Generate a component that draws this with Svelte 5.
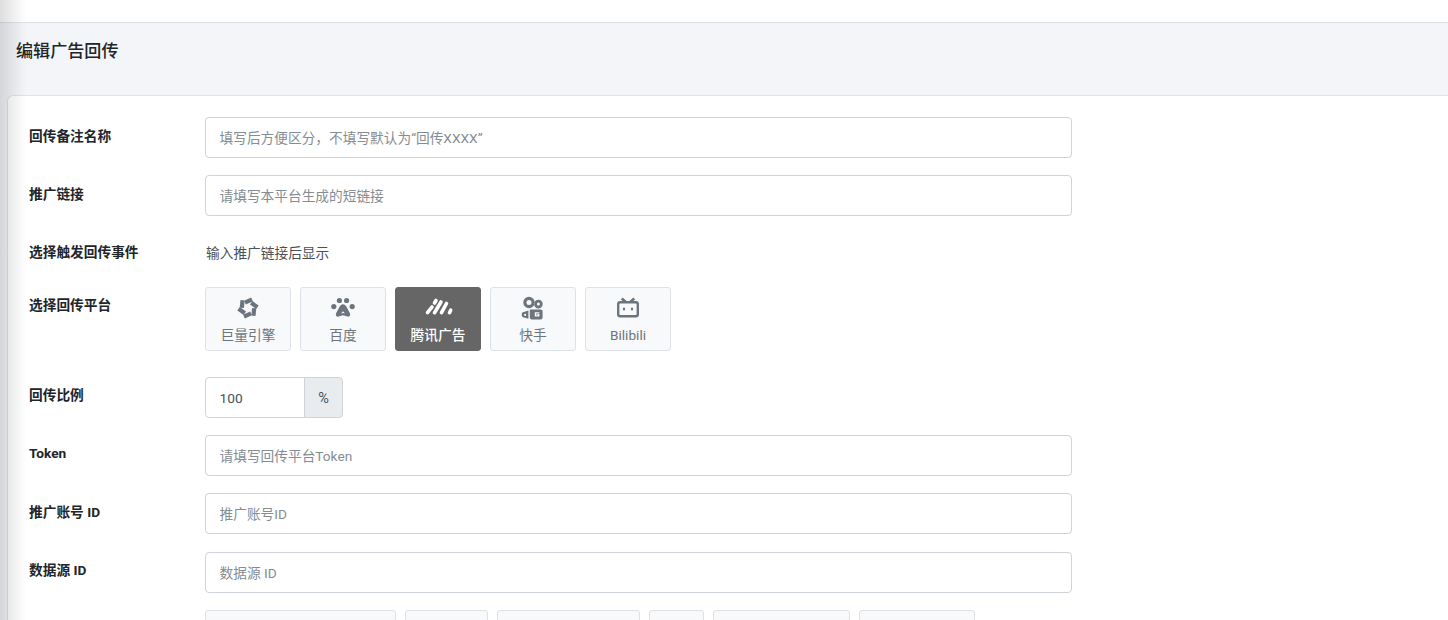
<script>
  const platforms = [
    { id: 'juliang', name: '巨量引擎' },
    { id: 'baidu', name: '百度' },
    { id: 'tencent', name: '腾讯广告', active: true },
    { id: 'kuaishou', name: '快手' },
    { id: 'bilibili', name: 'Bilibili' }
  ];

  const lastOptions = [191, 83, 143, 55, 137, 116];
  const blades = [0, 60, 120, 180, 240, 300];
</script>

<div class="page">
  <div class="topbar"></div>
  <div class="edge"></div>
  <h1 class="title">编辑广告回传</h1>

  <div class="card">
    <div class="row">
      <span class="label">回传备注名称</span>
      <input class="input" placeholder="填写后方便区分，不填写默认为“回传XXXX”" />
    </div>
    <div class="row">
      <span class="label">推广链接</span>
      <input class="input" placeholder="请填写本平台生成的短链接" />
    </div>
    <div class="row text-row">
      <span class="label">选择触发回传事件</span>
      <span class="hint">输入推广链接后显示</span>
    </div>
    <div class="row platform-row">
      <span class="label">选择回传平台</span>
      <div class="platforms">
        {#each platforms as p (p.id)}
          <button class="platform" class:active={p.active}>
            <svg class="icon" viewBox="0 0 24 24" fill="currentColor">
              {#if p.id === 'juliang'}
                <g fill="none" stroke="currentColor" stroke-width="4.2">
                  {#each blades as a}
                    <path d="M16 3.400L9 6.600" transform="rotate({a} 12 12)" />
                  {/each}
                </g>
              {:else if p.id === 'baidu'}
                <circle cx="8.400" cy="4.500" r="2.600" />
                <circle cx="15.600" cy="4.500" r="2.600" />
                <circle cx="2.800" cy="10.600" r="2.600" />
                <circle cx="21.200" cy="10.600" r="2.600" />
                <path d="M12 8.200c1.600 0 2.600 1 3.300 2.400l3.600 6.600c.9 2-.6 3.900-2.500 3.400L12 19.200l-4.400 1.400c-1.900.5-3.400-1.400-2.500-3.400L8.700 10.600c.7-1.400 1.700-2.400 3.300-2.400zm0 7l-2 2.400 2-.6 2 .6z" fill-rule="evenodd" />
              {:else if p.id === 'tencent'}
                <g fill="none" stroke="currentColor" stroke-width="3.600" stroke-linecap="round">
                  <path d="M1.500 16.700L6 11M8.500 16.700L15 6M8.500 7l1.500-2.500M15.500 16.700L20.500 7.500M23.500 16.700l1.200-2.500" />
                </g>
              {:else if p.id === 'kuaishou'}
                <path d="M8 .8a5.700 5.700 0 1 1 0 11.400A5.700 5.700 0 0 1 8 .8zm0 3.200a2.500 2.500 0 1 0 0 5 2.500 2.500 0 0 0 0-5zM17.400 3.800a4.300 4.300 0 1 1 0 8.600 4.300 4.300 0 0 1 0-8.600zm0 2.800a1.500 1.500 0 1 0 0 3 1.500 1.500 0 0 0 0-3z" fill-rule="evenodd" />
                <path d="M8.800 13.400h11c1 0 1.800.8 1.800 1.800v6.400c0 1-.8 1.800-1.800 1.800h-9.200c-1 0-1.800-.8-1.800-1.800zm5 2.800v4.400h4.600v-2.600h-2.200v.8h.6v.4h-1.400v-1.800h3v-1.200z" fill-rule="evenodd" />
                <path d="M2 16.200l5.400-1.600v8.200L2 21.200c-.8-.3-1.200-.8-1.200-1.600v-1.800c0-.8.4-1.300 1.200-1.600zm1 2.100v1.200l2 .6v-2.400z" fill-rule="evenodd" />
              {:else}
                <path d="M6.600 1.600l4 3.400h2.800l4-3.400 1.800 1.800-1.900 1.600H20c1.800 0 3 1.200 3 3v10.400c0 1.800-1.200 3-3 3H4c-1.800 0-3-1.200-3-3V8c0-1.800 1.200-3 3-3h2.700L4.800 3.400zM4.400 7.500c-.6 0-1 .4-1 1v9.600c0 .6.4 1 1 1h15.200c.6 0 1-.4 1-1V8.500c0-.6-.4-1-1-1zM8 11.400a1.100 1.100 0 0 1 1.100 1.100v1a1.100 1.100 0 0 1-2.200 0v-1A1.100 1.100 0 0 1 8 11.400zm8 0a1.100 1.100 0 0 1 1.100 1.100v1a1.100 1.100 0 0 1-2.200 0v-1a1.100 1.100 0 0 1 1.100-1.100z" fill-rule="evenodd" />
              {/if}
            </svg>
            <span class="platform-name">{p.name}</span>
          </button>
        {/each}
      </div>
    </div>
    <div class="row">
      <span class="label">回传比例</span>
      <div class="group">
        <input class="input ratio" value="100" />
        <span class="unit">%</span>
      </div>
    </div>
    <div class="row">
      <span class="label">Token</span>
      <input class="input" placeholder="请填写回传平台Token" />
    </div>
    <div class="row">
      <span class="label">推广账号 ID</span>
      <input class="input" placeholder="推广账号ID" />
    </div>
    <div class="row">
      <span class="label">数据源 ID</span>
      <input class="input" placeholder="数据源 ID" />
    </div>
    <div class="row">
      <span class="label"></span>
      <div class="options">
        {#each lastOptions as w}
          <span class="option" style="width: {w}px"></span>
        {/each}
      </div>
    </div>
  </div>
</div>

<style>
  :global(body) {
    margin: 0;
    background: #fff;
    font-family: Roboto, "Noto Sans CJK SC", sans-serif;
    font-size: 13.7px;
    color: #212529;
    overflow: hidden;
  }
  .page {
    position: relative;
    height: 620px;
    overflow: hidden;
    background: #f4f5f9;
  }
  .topbar {
    height: 22px;
    background: #fff;
    border-bottom: 1px solid #dee2e6;
  }
  .edge {
    position: absolute;
    left: 0;
    top: 0;
    bottom: 0;
    width: 26px;
    background: linear-gradient(to right, rgba(0, 0, 0, 0.13), rgba(0, 0, 0, 0));
    pointer-events: none;
    z-index: 2;
  }
  .title {
    margin: 0;
    height: 72px;
    padding-left: 16px;
    font-size: 17.1px;
    font-weight: 500;
    line-height: 56px;
    color: #212529;
  }
  .card {
    margin-left: 7px;
    padding: 21px 0 0 21px;
    height: 600px;
    background: #fff;
    border: 1px solid #dfe3e8;
    border-right: 0;
    border-radius: 6px 0 0 0;
  }
  .row {
    display: flex;
    align-items: flex-start;
    margin-bottom: 17.35px;
  }
  .label {
    width: 176px;
    flex: none;
    padding-top: 8.5px;
    font-weight: 700;
    line-height: 21px;
    color: #212529;
  }
  .input {
    box-sizing: border-box;
    width: 867px;
    height: 41px;
    padding: 1px 13.5px 0;
    border: 1px solid #ced4da;
    border-radius: 4px;
    background: #fff;
    font: inherit;
    color: #495057;
    outline: none;
  }
  .input::placeholder {
    color: #858c93;
    opacity: 1;
  }
  .text-row {
    height: 35.6px;
  }
  .hint {
    padding: 9px 0 0 1px;
    line-height: 21px;
    color: #495057;
  }
  .platform-row {
    margin-bottom: 26px;
  }
  .platforms {
    display: flex;
    gap: 9px;
  }
  .platform {
    box-sizing: border-box;
    width: 86px;
    height: 64px;
    padding: 8px 0 0;
    display: flex;
    flex-direction: column;
    align-items: center;
    background: #f8f9fa;
    border: 1px solid #dee2e6;
    border-radius: 3px;
    color: #6c757d;
    font: inherit;
  }
  .platform.active {
    background: #666;
    border-color: #666;
    color: #fff;
    font-weight: 500;
  }
  .icon {
    width: 24px;
    height: 24px;
    display: block;
    overflow: visible;
  }
  .platform-name {
    margin-top: 5px;
    line-height: 21px;
  }
  .group {
    display: flex;
  }
  .ratio {
    width: 100px;
    border-radius: 4px 0 0 4px;
  }
  .unit {
    box-sizing: border-box;
    width: 39px;
    height: 41px;
    margin-left: -1px;
    text-align: center;
    font-size: 14.5px;
    line-height: 41px;
    background: #e9ecef;
    border: 1px solid #ced4da;
    border-radius: 0 4px 4px 0;
    color: #495057;
  }
  .options {
    display: flex;
    gap: 9px;
  }
  .option {
    box-sizing: border-box;
    height: 64px;
    background: #f8f9fa;
    border: 1px solid #dee2e6;
    border-radius: 3px;
  }
</style>
